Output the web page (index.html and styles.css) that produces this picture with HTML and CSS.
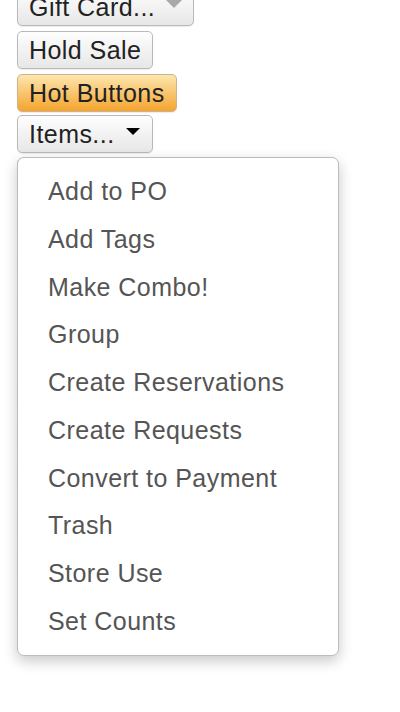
FILE: index.html
```html
<!DOCTYPE html>
<html lang="en">
<head>
<meta charset="utf-8">
<title>Register actions</title>
<link rel="stylesheet" href="styles.css">
</head>
<body>
<div class="toolbar">
  <button class="btn">Gift Card... <span class="caret caret-muted"></span></button>
  <button class="btn">Hold Sale</button>
  <button class="btn btn-hot">Hot Buttons</button>
  <div class="dropdown">
    <button class="btn">Items... <span class="caret"></span></button>
    <ul class="menu">
      <li class="menu-item">Add to PO</li>
      <li class="menu-item">Add Tags</li>
      <li class="menu-item">Make Combo!</li>
      <li class="menu-item">Group</li>
      <li class="menu-item">Create Reservations</li>
      <li class="menu-item">Create Requests</li>
      <li class="menu-item">Convert to Payment</li>
      <li class="menu-item">Trash</li>
      <li class="menu-item">Store Use</li>
      <li class="menu-item">Set Counts</li>
    </ul>
  </div>
  <span class="btn btn-under" aria-hidden="true"></span>
  <span class="btn btn-under" aria-hidden="true"></span>
  <span class="btn btn-under" aria-hidden="true"></span>
  <span class="btn btn-under" aria-hidden="true"></span>
  <span class="btn btn-under" aria-hidden="true"></span>
  <span class="btn btn-under" aria-hidden="true"></span>
  <span class="btn btn-under" aria-hidden="true"></span>
  <span class="btn btn-under" aria-hidden="true"></span>
  <span class="btn btn-under" aria-hidden="true"></span>
  <span class="btn btn-under" aria-hidden="true"></span>
  <span class="btn btn-under" aria-hidden="true"></span>
</div>
</body>
</html>
```

FILE: styles.css
```css
html, body {
  margin: 0;
  padding: 0;
  background: #ffffff;
}

body {
  font-family: "Liberation Sans", Arial, Helvetica, sans-serif;
  overflow: hidden;
  height: 712px;
}

.toolbar {
  display: flex;
  flex-direction: column;
  align-items: flex-start;
  gap: 5px;
  padding-left: 17px;
  margin-top: -12px;
}

.btn {
  display: inline-flex;
  align-items: center;
  gap: 11px;
  height: 38px;
  box-sizing: border-box;
  padding: 0 11px;
  border: 1px solid #b9b9b9;
  border-radius: 5px;
  background: linear-gradient(#fefefe, #e7e7e7);
  box-shadow: 0 1px 1px rgba(0, 0, 0, 0.08);
  font-family: inherit;
  font-size: 25px;
  letter-spacing: 0.45px;
  line-height: 36px;
  color: #222;
  white-space: nowrap;
}

.btn-under {
  width: 150px;
}

.btn-hot {
  background: linear-gradient(#fde6ae, #f4a42e);
  border-color: #c9b48f;
  margin-bottom: -2px;
}

.caret {
  display: inline-block;
  width: 0;
  height: 0;
  border-left: 7px solid transparent;
  border-right: 7px solid transparent;
  border-top: 7px solid #000;
  margin-right: 1px;
  margin-top: -6px;
}

.caret-muted {
  border-left-width: 8px;
  border-right-width: 8px;
  border-top: 8px solid #a8a8a8;
  margin-top: -7px;
  margin-right: 0;
}

.dropdown {
  position: relative;
}

.menu {
  position: absolute;
  z-index: 10;
  top: calc(100% + 4px);
  left: 0;
  width: 322px;
  box-sizing: border-box;
  margin: 0;
  padding: 10px 0 9px;
  list-style: none;
  background: #fff;
  border: 1px solid #bcbcbc;
  border-radius: 7px;
  box-shadow: 0 5px 14px rgba(0, 0, 0, 0.22);
}

.menu-item {
  height: 47.75px;
  line-height: 47.75px;
  padding-left: 30px;
  font-size: 25px;
  letter-spacing: 0.45px;
  color: #555;
  white-space: nowrap;
}
```
